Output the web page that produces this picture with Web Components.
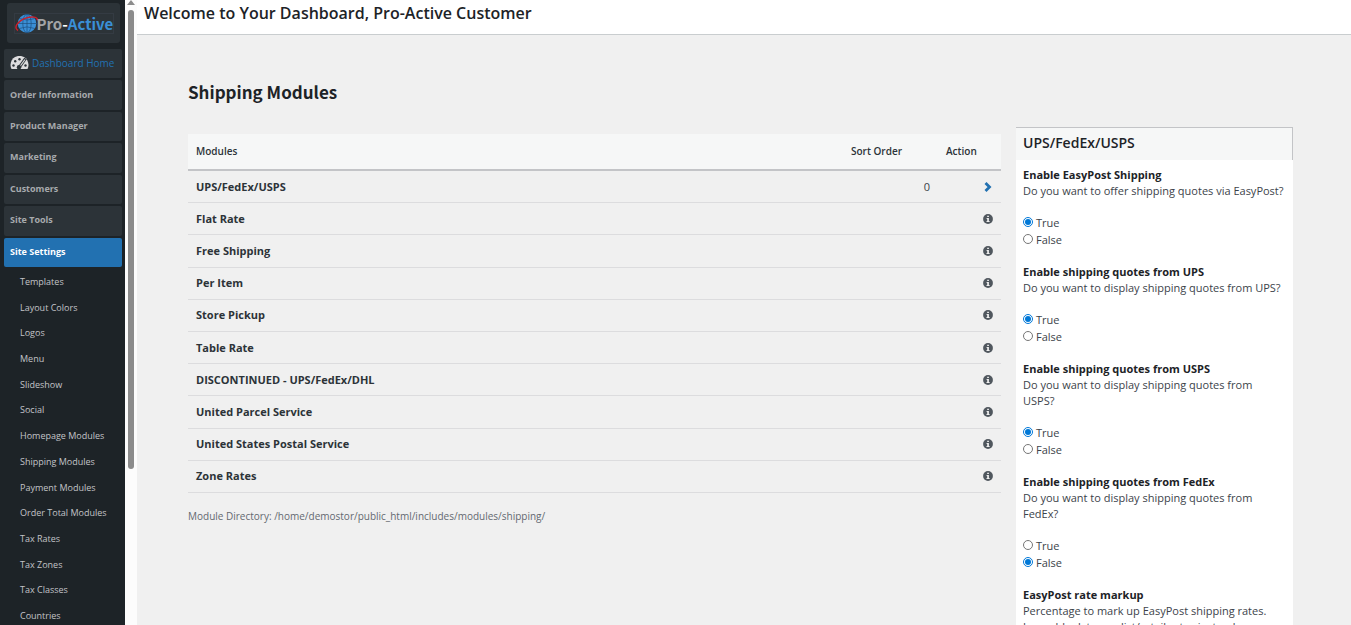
<!DOCTYPE html>
<html lang="en">
<head>
<meta charset="utf-8">
<title>Shipping Modules</title>
<style>
  html, body { height: 100%; }
  body {
    margin: 0;
    overflow: hidden;
    background: #f0f0f0;
    color: #3c434a;
    font: 11px/16px "Open Sans", sans-serif;
  }
</style>
</head>
<body>
<admin-shell>
  <side-bar slot="side"></side-bar>
  <page-header slot="header">Welcome to Your Dashboard, Pro-Active Customer</page-header>
  <module-list heading="Shipping Modules" directory="/home/demostor/public_html/includes/modules/shipping/"></module-list>
  <settings-panel heading="UPS/FedEx/USPS">
    <radio-setting name="easypost" label="Enable EasyPost Shipping" value="True">Do you want to offer shipping quotes via EasyPost?</radio-setting>
    <radio-setting name="ups" label="Enable shipping quotes from UPS" value="True">Do you want to display shipping quotes from UPS?</radio-setting>
    <radio-setting name="usps" label="Enable shipping quotes from USPS" value="True">Do you want to display shipping quotes from USPS?</radio-setting>
    <radio-setting name="fedex" label="Enable shipping quotes from FedEx" value="False">Do you want to display shipping quotes from FedEx?</radio-setting>
    <text-setting name="markup" label="EasyPost rate markup">Percentage to mark up EasyPost shipping rates. Leave blank to use list/retail rates instead.</text-setting>
  </settings-panel>
</admin-shell>

<script>
function attach(el, html) {
  const root = el.attachShadow({ mode: "open" });
  root.innerHTML = html;
  return root;
}

// page frame: menu, scroll track, header and the two content columns
class AdminShell extends HTMLElement {
  constructor() {
    super();
    attach(this, `
      <style>
        :host { display: flex; height: 100vh; overflow: hidden; }
        .page { flex: 1; min-width: 0; display: flex; flex-direction: column; }
        .content {
          flex: 1;
          min-height: 0;
          display: grid;
          grid-template-columns: minmax(0, 1fr) 277px;
          column-gap: 15px;
          align-items: start;
          padding: 0 58px 0 51px;
        }
      </style>
      <slot name="side"></slot>
      <scroll-track></scroll-track>
      <div class="page">
        <slot name="header"></slot>
        <main class="content"><slot></slot></main>
      </div>
    `);
  }
}

class SiteLogo extends HTMLElement {
  constructor() {
    super();
    attach(this, `
      <style>
        :host {
          display: flex;
          align-items: center;
          justify-content: center;
          height: 40px;
          margin: 3px 5px 6px 7px;
          border-radius: 3px;
          background: #2c3338;
        }
        a {
          display: flex;
          align-items: center;
          width: 98px;
          height: 19px;
          outline: 1px solid #343b43;
          color: #3a8fd6;
          font: 700 15px/19px "Noto Sans CJK SC", sans-serif;
          text-decoration: none;
        }
        svg { display: block; flex: none; width: 22px; height: 19px; overflow: visible; }
        .pro { color: #a2a4a6; }
        .dash { color: #fff; }
      </style>
      <a href="#">
        <svg viewBox="0 0 22 19">
          <circle cx="12" cy="9.500" r="9.300" fill="#3a8fd6"/>
          <g fill="none" stroke="#1d4f80" stroke-width=".7">
            <ellipse cx="12" cy="9.500" rx="4.200" ry="9.300"/>
            <path d="M12 0v19M3 9.500h18M4.600 4.600q7.400 3 14.800 0M4.600 14.400q7.400-3 14.800 0"/>
          </g>
          <path d="M3 16.500C-3 13 5 5 14 3.300c5-.9 9 .2 8.300 3" fill="none" stroke="#c8202c" stroke-width="1.500"/>
        </svg>
        <span class="pro">Pro</span><span class="dash">-</span><span>Active</span>
      </a>
    `);
  }
}

class SideBar extends HTMLElement {
  constructor() {
    super();
    const sections = ["Order Information", "Product Manager", "Marketing", "Customers", "Site Tools", "Site Settings"];
    const pages = [
      "Templates", "Layout Colors", "Logos", "Menu", "Slideshow", "Social", "Homepage Modules",
      "Shipping Modules", "Payment Modules", "Order Total Modules", "Tax Rates", "Tax Zones",
      "Tax Classes", "Countries",
    ];
    attach(this, `
      <style>
        :host { display: block; flex: none; width: 125px; overflow: hidden; background: #1d2327; }
        a { display: flex; align-items: center; text-decoration: none; white-space: nowrap; }
        .main { display: grid; grid-auto-rows: 1fr; gap: 2px; height: 218px; margin: 0 3px 0 4px; }
        .main a {
          padding: 0 6px 1px;
          border-radius: 2px;
          background: #2c3338;
          color: #a7aaad;
          font-size: 9px;
          font-weight: 700;
        }
        .main .home { gap: 3px; color: #2271b1; font-weight: 400; font-size: 10px; }
        .main .current { background: #2271b1; color: #fff; }
        .home svg { flex: none; width: 19px; height: 14px; }
        .sub { display: grid; grid-auto-rows: 1fr; height: 360px; margin: 2px 0 0; }
        .sub a { padding-left: 20px; color: #c3c4c7; font-size: 9px; }
      </style>
      <site-logo></site-logo>
      <nav class="main">
        <a class="home" href="#">
          <svg viewBox="0 0 19 14">
            <path d="M1.500 13A9 9 0 1 1 17.500 13Z" fill="#dcdcde"/>
            <g fill="#2c3338"><circle cx="3.500" cy="9.500" r="1.200"/><circle cx="5.200" cy="5.300" r="1.200"/><circle cx="9.500" cy="3.300" r="1.200"/><circle cx="15.500" cy="9.500" r="1.200"/></g>
            <path d="M15.500 2.500 9.500 11" stroke="#2c3338" stroke-width="3"/>
            <path d="M15 3.500 9.500 11" stroke="#dcdcde" stroke-width="1.200"/>
            <circle cx="9" cy="11.300" r="2.200" fill="#2c3338"/>
          </svg>
          Dashboard Home
        </a>
        ${sections.map((s) => `<a href="#"${s === "Site Settings" ? ' class="current"' : ""}>${s}</a>`).join("")}
      </nav>
      <nav class="sub">${pages.map((p) => `<a href="#">${p}</a>`).join("")}</nav>
    `);
  }
}

class ScrollTrack extends HTMLElement {
  constructor() {
    super();
    attach(this, `
      <style>
        :host { display: flex; flex-direction: column; align-items: center; flex: none; width: 12px; background: #fcfcfc; }
        svg { display: block; flex: none; width: 8px; height: 10px; }
        .thumb { width: 6px; height: 73.5%; border-radius: 3px; background: #8b8b8b; }
      </style>
      <svg viewBox="0 0 8 10"><path d="M4 0 8 5H0Z" fill="#8b8b8b"/></svg>
      <div class="thumb"></div>
    `);
  }
}

class PageHeader extends HTMLElement {
  constructor() {
    super();
    attach(this, `
      <style>
        :host { display: block; flex: none; background: #fff; border-bottom: 1px solid #c9cdcf; }
        h1 { margin: 0; padding: 1px 7px 9px; color: #1d2327; font-size: 16px; line-height: 24px; font-weight: 600; }
      </style>
      <h1><slot></slot></h1>
    `);
  }
}

class ModuleList extends HTMLElement {
  constructor() {
    super();
    this.modules = [
      "UPS/FedEx/USPS", "Flat Rate", "Free Shipping", "Per Item", "Store Pickup", "Table Rate",
      "DISCONTINUED - UPS/FedEx/DHL", "United Parcel Service", "United States Postal Service", "Zone Rates",
    ];
    this.attachShadow({ mode: "open" });
  }

  connectedCallback() {
    const chevron = `<svg viewBox="0 0 10 10"><path d="M2.500 1 6.500 5 2.500 9" fill="none" stroke="#2271b1" stroke-width="2.800"/></svg>`;
    const info = `<svg viewBox="0 0 10 10"><circle cx="5" cy="5" r="4.900" fill="#50575e"/><path d="M4.200 1.700h1.700v1.400H4.200zM3.600 4h2.300v3h.7v1.100H3.500V7h.7V5.100h-.6z" fill="#f0f0f0"/></svg>`;
    this.shadowRoot.innerHTML = `
      <style>
        :host { display: block; }
        h2 { margin: 0; padding: 44px 0 30px; color: #1d2327; font: 700 17px/25px "Noto Sans CJK SC", sans-serif; }
        table { width: 100%; height: 359px; border-collapse: separate; border-spacing: 0; }
        th, td { padding: 0 8px; text-align: left; }
        thead th { height: 33px; padding-bottom: 2px; background: #f6f7f7; border-bottom: 2px solid #c3c4c7; color: #2c3338; font-size: 10px; font-weight: 600; }
        tbody th, td { border-bottom: 1px solid #dcdcde; }
        tbody th { color: #2c3338; font-weight: 700; }
        .sort { width: 79px; }
        .action { width: 47px; }
        td { text-align: right; }
        td a { display: flex; justify-content: flex-end; }
        svg { display: block; width: 10px; height: 10px; }
        p { margin: 15px 0 0; color: #646970; font-size: 10px; }
      </style>
      <h2>${this.getAttribute("heading")}</h2>
      <table>
        <thead><tr><th>Modules</th><th class="sort">Sort Order</th><th class="action">Action</th></tr></thead>
        <tbody>
          ${this.modules.map((name, i) => `
            <tr>
              <th scope="row">${name}</th>
              <td>${i === 0 ? "0" : ""}</td>
              <td><a href="#" aria-label="${i === 0 ? "Selected" : "Info"}">${i === 0 ? chevron : info}</a></td>
            </tr>`).join("")}
        </tbody>
      </table>
      <p>Module Directory: ${this.getAttribute("directory")}</p>
    `;
  }
}

class SettingsPanel extends HTMLElement {
  connectedCallback() {
    attach(this, `
      <style>
        :host { display: block; margin-top: 92px; background: #fff; }
        h3 {
          margin: 0;
          padding: 3px 7px 5px;
          border: solid #c3c4c7;
          border-width: 1px 1px 0 0;
          background: #f6f7f7;
          color: #1d2327;
          font-size: 14px;
          line-height: 24px;
          font-weight: 600;
        }
        form { padding: 7px; }
      </style>
      <h3>${this.getAttribute("heading")}</h3>
      <form><slot></slot></form>
    `);
  }
}

class RadioSetting extends HTMLElement {
  connectedCallback() {
    const name = this.getAttribute("name");
    const value = this.getAttribute("value");
    attach(this, `
      <style>
        :host { display: block; margin-bottom: 16px; }
        fieldset { margin: 0; padding: 0; border: 0; min-width: 0; }
        legend { padding: 0; color: #1d2327; font-weight: 700; }
        p { margin: 0 0 15px; }
        label { display: flex; align-items: center; gap: 3px; line-height: 17px; }
        input { width: 10px; height: 10px; margin: 0 0 2px; accent-color: #0078d7; }
      </style>
      <fieldset>
        <legend>${this.getAttribute("label")}</legend>
        <p><slot></slot></p>
        ${["True", "False"].map((v) => `
          <label><input type="radio" name="${name}" value="${v}"${v === value ? " checked" : ""}>${v}</label>`).join("")}
      </fieldset>
    `);
  }
}

class TextSetting extends HTMLElement {
  connectedCallback() {
    attach(this, `
      <style>
        :host { display: block; margin-bottom: 16px; }
        label { display: block; color: #1d2327; font-weight: 700; }
        p { margin: 0 0 8px; }
      </style>
      <label for="field">${this.getAttribute("label")}</label>
      <p><slot></slot></p>
      <input id="field" type="text" name="${this.getAttribute("name")}">
    `);
  }
}

customElements.define("scroll-track", ScrollTrack);
customElements.define("site-logo", SiteLogo);
customElements.define("side-bar", SideBar);
customElements.define("page-header", PageHeader);
customElements.define("module-list", ModuleList);
customElements.define("radio-setting", RadioSetting);
customElements.define("text-setting", TextSetting);
customElements.define("settings-panel", SettingsPanel);
customElements.define("admin-shell", AdminShell);
</script>
</body>
</html>
